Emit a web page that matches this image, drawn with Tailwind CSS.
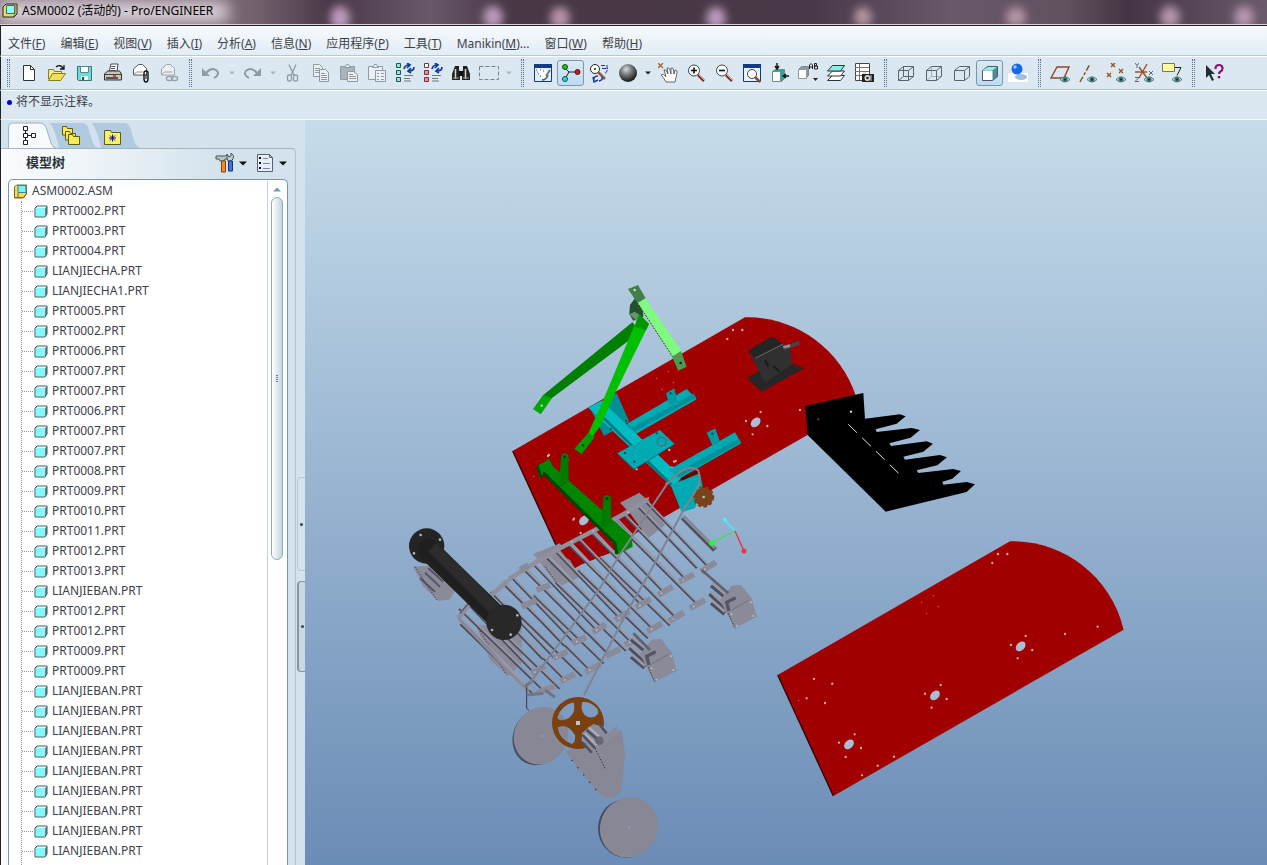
<!DOCTYPE html>
<html lang="zh-CN">
<head>
  <meta charset="UTF-8" />
  <meta name="viewport" content="width=device-width, initial-scale=1.0" />
  <title>ASM0002 (活动的) - Pro/ENGINEER</title>
  <script src="https://cdn.jsdelivr.net/npm/@tailwindcss/browser@4"></script>
</head>
<body class="h-screen flex flex-col overflow-hidden bg-[#dbe8f1] font-['Noto_Sans','Noto_Sans_CJK_SC',sans-serif] text-xs text-[#3c4248]">

  <!-- Shared symbols -->
  <svg class="hidden">
    <symbol id="caret" viewBox="0 0 8 5"><path d="M0 .5h8L4 4.500z" fill="currentColor"/></symbol>
    <symbol id="eye" viewBox="0 0 10 7"><path d="M0 3.5Q5-2 10 3.500Q5 8.500 0 3.500z" fill="#c8d4d8" stroke="#4a5a60" stroke-width=".8"/><circle cx="5" cy="3.500" r="2.500" fill="#2a7a78"/><circle cx="5" cy="3.500" r="1" fill="#0a2a2c"/></symbol>
    <symbol id="part" viewBox="0 0 14 14"><path d="M1 4l2-2h10v8l-2 3H1z" fill="#5a8c90" stroke="#4a565a"/><path d="M1.500 4.500L3.500 2.500h9L11 4.500z" fill="#d8ffff"/><path d="M1.500 4h9.500v8.500H1.500z" fill="#84f8fa"/></symbol>
    <symbol id="lens" viewBox="0 0 20 20"><path d="M12 12l6 6" stroke="#7a2a20" stroke-width="2.500"/><path d="M13 12l5.500 5.500" stroke="#e0a898"/><circle cx="8" cy="7.500" r="5.500" fill="#f6f9fb" stroke="#444"/></symbol>
  </svg>

  <!-- Title bar -->
  <header class="relative h-[26px] shrink-0 overflow-hidden border-b border-[#222] bg-[#5b4958] flex items-center">
    <svg class="absolute inset-0 w-full h-full" viewBox="0 0 1267 25" preserveAspectRatio="none">
      <defs>
        <linearGradient id="glass"><stop offset="0" stop-color="#8d7d8b"/><stop offset=".2" stop-color="#75626f"/><stop offset=".26" stop-color="#4a3847"/><stop offset=".34" stop-color="#69586a"/><stop offset=".4" stop-color="#493746"/><stop offset=".64" stop-color="#493847"/><stop offset=".75" stop-color="#69586a"/><stop offset=".84" stop-color="#62515f"/><stop offset=".89" stop-color="#453443"/><stop offset="1" stop-color="#6b5a69"/></linearGradient>
        <filter id="soft" x="-50%" y="-100%" width="200%" height="300%"><feGaussianBlur stdDeviation="4"/></filter>
        <filter id="softer" x="-50%" y="-200%" width="200%" height="500%"><feGaussianBlur stdDeviation="8"/></filter>
      </defs>
      <rect width="1267" height="25" fill="url(#glass)"/>
      <rect x="0" y="2" width="228" height="20" fill="#e2dae1" filter="url(#softer)"/>
      <g filter="url(#soft)" fill="#bc9abb">
        <ellipse cx="340" cy="18" rx="10" ry="12"/><ellipse cx="493" cy="17" rx="10" ry="11"/><ellipse cx="560" cy="18" rx="10" ry="11" fill="#b893a6"/>
        <ellipse cx="716" cy="18" rx="10" ry="11"/><ellipse cx="863" cy="17" rx="9" ry="10" fill="#b595a2"/><ellipse cx="1016" cy="17" rx="10" ry="10" fill="#b595a6"/>
        <ellipse cx="1170" cy="17" rx="10" ry="11" fill="#b595ae"/><ellipse cx="1244" cy="17" rx="10" ry="11" fill="#b595ae"/>
      </g>
      <path d="M0 24.500h1267" stroke="#d8d0d6"/>
    </svg>
    <svg class="relative ml-[2px] mb-1 w-4 h-4" viewBox="0 0 16 16"><path d="M1 4l3-3h11v10l-3 3H1z" fill="#e9d96a" stroke="#222"/><path d="M4.500 2.500h8v8h-8z" fill="#8ff" stroke="#466"/><path d="M13 2v9l-2 3" stroke="#786a20" fill="none"/></svg>
    <h1 class="relative ml-1 mb-1 text-black">ASM0002 (活动的) - Pro/ENGINEER</h1>
  </header>

  <!-- Menu bar -->
  <nav class="h-[30px] shrink-0 pt-1.5 pl-[7px] flex items-center gap-[15px] whitespace-nowrap border-l border-b border-l-[#222] border-b-[#b4c9dc] bg-linear-to-b from-[#f6fafd] to-[#e3edf5]">
    <button>文件(<u>F</u>)</button>
    <button>编辑(<u>E</u>)</button>
    <button>视图(<u>V</u>)</button>
    <button>插入(<u>I</u>)</button>
    <button>分析(<u>A</u>)</button>
    <button>信息(<u>N</u>)</button>
    <button>应用程序(<u>P</u>)</button>
    <button>工具(<u>T</u>)</button>
    <button>Manikin(<u>M</u>)...</button>
    <button>窗口(<u>W</u>)</button>
    <button>帮助(<u>H</u>)</button>
  </nav>

  <!-- Toolbar -->
  <div class="h-[34px] shrink-0 flex items-center border-l border-b border-l-[#222] border-b-[#a9bfd3] border-t border-t-white bg-[#dbe8f2] *:shrink-0 [&_button]:h-[26px] [&_button]:flex [&_button]:items-center [&_button]:justify-center">
    <span class="w-[14px] h-7 flex justify-center gap-px"><i class="border-l border-dotted border-[#54708a]"></i><i class="border-l border-dotted border-[#54708a]"></i></span>
    <button class="w-7" aria-label="新建"><svg class="w-5 h-5" viewBox="0 0 20 20"><path d="M4.500 2.500h7l4 4v11h-11z" fill="#fff" stroke="#333"/><path d="M11.500 2.500v4h4" fill="none" stroke="#333"/></svg></button>
    <button class="w-7" aria-label="打开"><svg class="w-5 h-5" viewBox="0 0 20 20"><path d="M1.500 16V6.500h5l1 2h7V11" fill="#f7ee8a" stroke="#8a7a20"/><path d="M1.500 17.500l4-7h13l-5 7z" fill="#f5e058" stroke="#8a7a20"/><path d="M9 4q4-3 7 1M17 2v4h-4" fill="none" stroke="#111" stroke-width="1.300"/></svg></button>
    <button class="w-7" aria-label="保存"><svg class="w-5 h-5" viewBox="0 0 20 20"><path d="M2.500 3.500h14v14h-13l-1-1z" fill="#6fdcd8" stroke="#377"/><path d="M5.500 3.500h8v6h-8z" fill="#fff" stroke="#588"/><path d="M6 13h7v4H6z" fill="#e8f4f4"/><path d="M7 14h2v3H7z" fill="#255"/></svg></button>
    <button class="w-7" aria-label="打印"><svg class="w-5 h-5" viewBox="0 0 20 20"><path d="M6 9l2-8h7l-1 8" fill="#fff" stroke="#444"/><path d="M8.500 3.500h4M8 5.500h4M7.500 7.500h5" stroke="#555"/><path d="M1.500 11l3-3h12l2 3v6h-17z" fill="#c9c6b8" stroke="#333"/><path d="M2 11.500h16" stroke="#444"/><path d="M3 15h12" stroke="#555" stroke-width="2"/><path d="M10 13h3" stroke="#c22" stroke-width="1.500"/></svg></button>
    <button class="w-7" aria-label="发送附件"><svg class="w-5 h-5" viewBox="0 0 20 20"><path d="M2.500 12V6l5-4.500h4l4 4V12z" fill="#fff" stroke="#555"/><path d="M2.500 12l3-3h6" stroke="#888" fill="none"/><path d="M13 17V10q0-2 2-2t2 2v6q0 3-2 3t-2-3" stroke="#111" fill="none" stroke-width="1.400"/><path d="M15 11v5" stroke="#111"/></svg></button>
    <button class="w-7" aria-label="发送链接"><svg class="w-5 h-5" viewBox="0 0 20 20" fill="none" stroke="#98a3ac"><path d="M2.500 12V6l5-4.500h4l4 4V12z" fill="#edf2f6"/><path d="M2.500 12l3-3h8"/><rect x="7.500" y="13.500" width="6" height="4" rx="2" stroke-width="1.500"/><rect x="12.500" y="13.500" width="6" height="4" rx="2" stroke-width="1.500"/></svg></button>

    <span class="w-[14px] h-7 flex justify-center gap-px"><i class="border-l border-dotted border-[#54708a]"></i><i class="border-l border-dotted border-[#54708a]"></i></span>
    <button class="w-7" aria-label="撤消"><svg class="w-5 h-5" viewBox="0 0 20 20"><path d="M5 10q5-6 10-3 5 4-2 8" fill="none" stroke="#8f9aa3" stroke-width="2"/><path d="M1 5v8h8z" fill="#8f9aa3"/></svg></button>
    <button class="w-[13px] text-[#a8b4be]" aria-label="撤消列表"><svg class="w-1.5 h-1"><use href="#caret"/></svg></button>
    <button class="w-7" aria-label="重做"><svg class="w-5 h-5" viewBox="0 0 20 20"><path d="M15 10q-5-6-10-3-5 4 2 8" fill="none" stroke="#8f9aa3" stroke-width="2"/><path d="M19 5v8h-8z" fill="#8f9aa3"/></svg></button>
    <button class="w-[13px] text-[#a8b4be]" aria-label="重做列表"><svg class="w-1.5 h-1"><use href="#caret"/></svg></button>
    <button class="w-7" aria-label="剪切"><svg class="w-5 h-5" viewBox="0 0 20 20" fill="none" stroke="#8f9aa3" stroke-width="1.300"><path d="M6 1.500l5 11M13 1.500l-5 11"/><rect x="4.500" y="12" width="4" height="6" rx="1.500"/><rect x="10.500" y="12" width="4" height="6" rx="1.500"/></svg></button>
    <button class="w-7" aria-label="复制"><svg class="w-5 h-5" viewBox="0 0 20 20" fill="#eaf0f4" stroke="#8f9aa3"><path d="M2.500 1.500h6l3 3v9h-9z"/><path d="M4 5.500h5M4 7.500h4M4 9.500h4"/><path d="M8.500 6.500h6l3 3v9h-9z"/><path d="M10 10.500h4M10 12.500h6M10 14.500h6M10 16.500h6"/></svg></button>
    <button class="w-7" aria-label="粘贴"><svg class="w-5 h-5" viewBox="0 0 20 20" fill="#eaf0f4" stroke="#8f9aa3"><path d="M1.500 3.500h14v13h-14z" fill="#a9b3ba"/><path d="M5.500 4.500l2-3h2l2 3z"/><path d="M8.500 8.500h6l4 3v7h-10z"/><path d="M10 11.500h4M10 13.500h7M10 15.500h7"/></svg></button>
    <button class="w-7" aria-label="选择性粘贴"><svg class="w-5 h-5" viewBox="0 0 20 20" fill="#eaf0f4" stroke="#8f9aa3"><path d="M1.500 3.500h14v13h-14z"/><path d="M5.500 4.500l2-3h2l2 3z"/><path d="M8.500 7.500h10v11h-10z"/><path d="M10 10.500h2M10 13.500h2M10 16.500h2M14 10.500h3M14 13.500h3M14 16.500h3"/></svg></button>
    <button class="w-7" aria-label="再生"><svg class="w-5 h-5" viewBox="0 0 20 20"><g fill="#8fe8d8" stroke="#255"><path d="M1.500.5h4v4h-4zM1.500 7.500h4v4h-4zM1.500 14.500h4v4h-4z"/></g><path d="M9 6q1-4 5-4M12 0l3 2-3 3M19 4q0 4-5 4M16 5l-3 3 3 2" fill="none" stroke="#123a98" stroke-width="1.700"/><path d="M9 12.500h9M9 15.500h6M9 18h7" stroke="#777"/></svg></button>
    <button class="w-7" aria-label="再生管理器"><svg class="w-5 h-5" viewBox="0 0 20 20"><g fill="#f58a98" stroke="#733"><path d="M1.500.5h4v4h-4z" fill="#fff"/><path d="M1.500 7.500h4v4h-4zM1.500 14.500h4v4h-4z"/></g><path d="M9 6q1-4 5-4M12 0l3 2-3 3M19 4q0 4-5 4M16 5l-3 3 3 2" fill="none" stroke="#123a98" stroke-width="1.700"/><path d="M9 12.500h9M9 15.500h6M9 18h7" stroke="#777"/></svg></button>
    <button class="w-7" aria-label="查找"><svg class="w-5 h-5" viewBox="0 0 20 20"><path d="M4 3h4v4l1 2v8H1V11zM12 3h4l3 8v6h-8V9l1-2z" fill="#222"/><path d="M8 8h4v5H8z" fill="#111"/><path d="M4.500 6v10M14.500 6v10" stroke="#d8d8c8" stroke-width="1.500"/><path d="M2 15h6M12 15h6" stroke="#999"/></svg></button>
    <button class="w-7" aria-label="选取框"><svg class="w-5 h-5" viewBox="0 0 20 20"><path d="M.5 3.500h19v13H.5z" fill="none" stroke="#75828d" stroke-dasharray="4 2"/></svg></button>
    <button class="w-3 text-[#a8b4be]" aria-label="选取列表"><svg class="w-1.5 h-1"><use href="#caret"/></svg></button>

    <span class="w-[14px] h-7 flex justify-center gap-px"><i class="border-l border-dotted border-[#54708a]"></i><i class="border-l border-dotted border-[#54708a]"></i></span>
    <button class="w-7" aria-label="重画"><svg class="w-5 h-5" viewBox="0 0 20 20"><path d="M1.500 1.500h17v17h-17z" fill="#dff0fa" stroke="#123a78"/><path d="M1 1h18v4H1z" fill="#123a88"/><path d="M3 6l10 1 3 4-5 5-7-5z" fill="#fff"/><path d="M3 7h1M4 9h1M5 11h1M7 13h1M7 7h1M10 8h1" stroke="#345"/><path d="M9 17q4 0 6-5" fill="none" stroke="#456" stroke-width="1.500"/><path d="M13 13l4-6" stroke="#7a7078" stroke-width="2"/></svg></button>
    <button class="w-[27px] rounded-[3px] border border-[#8294a3] bg-linear-to-b from-[#dbe9f4] to-[#bcdcf2]" aria-label="旋转中心"><svg class="w-5 h-5" viewBox="0 0 20 20"><path d="M3 4l5 5h8M8 9l-4 7" fill="none" stroke="#222"/><circle cx="4" cy="4" r="2.500" fill="#1cc41c" stroke="#151"/><circle cx="16.500" cy="9" r="2.500" fill="#d8141c" stroke="#511"/><circle cx="4" cy="16" r="2.500" fill="#28d8e8" stroke="#155"/></svg></button>
    <button class="ml-px w-7" aria-label="定向模式"><svg class="w-5 h-5" viewBox="0 0 20 20"><circle cx="6" cy="6" r="4.500" fill="#fff" stroke="#222"/><circle cx="6" cy="6" r="1" fill="#222"/><path d="M9 9l7 7" stroke="#8a5a48" stroke-width="2.500"/><path d="M12 2.500h5M13 5.500h6M18 2v6l-2 3" fill="none" stroke="#16389c" stroke-dasharray="4 1"/><path d="M9 13q-5 0-4 5M4 14l1 5 4-2M10 18q4-1 3-4" fill="none" stroke="#16389c" stroke-width="1.400"/></svg></button>
    <button class="w-7" aria-label="外观库"><svg class="w-5 h-5" viewBox="0 0 20 20"><defs><radialGradient id="ball" cx=".4" cy=".3" r=".7"><stop offset="0" stop-color="#d8dcde"/><stop offset=".45" stop-color="#74787b"/><stop offset="1" stop-color="#151718"/></radialGradient></defs><circle cx="11" cy="10" r="9" fill="url(#ball)"/></svg></button>
    <button class="w-[13px] text-[#222]" aria-label="外观列表"><svg class="w-1.5 h-1"><use href="#caret"/></svg></button>
    <button class="w-7" aria-label="平移"><svg class="w-5 h-5" viewBox="0 0 20 20"><path d="M0 0l5 5M5 0L0 5" stroke="#a8622a" stroke-width="1.300"/><path d="M8 19q-2-4-5-7 2-2 5 1.500L6 7q2-1 3 2l1 2-1-6q2-1 3 2l1 4V5q2-1 2.500 2l.5 4 1-4q2.500 0 2 3l-2 9z" fill="#fff" stroke="#444" stroke-width=".8"/></svg></button>
    <button class="w-7" aria-label="放大"><svg class="w-5 h-5" viewBox="0 0 20 20"><use href="#lens"/><path d="M5 7.500h6M8 4.500v6" stroke="#111" stroke-width="1.600"/></svg></button>
    <button class="w-7" aria-label="缩小"><svg class="w-5 h-5" viewBox="0 0 20 20"><use href="#lens"/><path d="M5 7.500h6" stroke="#111" stroke-width="1.600"/></svg></button>
    <button class="w-7" aria-label="重新调整"><svg class="w-5 h-5" viewBox="0 0 20 20"><path d="M1.500 1.500h17v17h-17z" fill="#eef5fa" stroke="#123a78"/><path d="M1 1h18v4H1z" fill="#123a88"/><path d="M13 14l5 5" stroke="#8a4a38" stroke-width="2.500"/><circle cx="10" cy="11" r="4.500" fill="#fff" stroke="#444"/></svg></button>
    <button class="w-7" aria-label="重定向"><svg class="w-5 h-5" viewBox="0 0 20 20"><path d="M2.500 8.500l3-2h9v9l-3 3h-9z" fill="#2aa8a8" stroke="#788"/><path d="M2.500 8.500h8v10h-8z" fill="#fff" stroke="#788"/><path d="M7 0v5M5 3l2 3 2-3M19 13h-5M16 11l-3 2 3 2" stroke="#111" fill="none" stroke-width="1.400"/></svg></button>
    <button class="w-7" aria-label="保存的视图列表"><svg class="w-5 h-5" viewBox="0 0 20 20"><path d="M.5 6.500l3-3h7v9l-3 3h-7z" fill="#7aa0b0" stroke="#888"/><path d="M.5 6.500h8v9h-8z" fill="#fff" stroke="#999"/><path d="M11.500 6V2l1.500-1.500L14.500 2v4M11.500 4h3M16.500.5V6h3V3h-3 2V.5z" fill="none" stroke="#222"/><path d="M15 15h5l-2.500 3z" fill="#222"/></svg></button>
    <button class="w-7" aria-label="层"><svg class="w-5 h-5" viewBox="0 0 20 20" stroke="#333"><path d="M1.500 17.500l5-5h12l-4 5z" fill="#fff"/><path d="M1.500 13l5-5h12l-4 5z" fill="#fff"/><path d="M1.500 8l5-5.500h12l-4 5.500z" fill="#7ff2ee"/></svg></button>
    <button class="w-7" aria-label="视图管理器"><svg class="w-5 h-5" viewBox="0 0 20 20"><path d="M1.500.5h14v17h-14z" fill="#fff" stroke="#444"/><path d="M1 4.500h14M1 8.500h14M1 12.500h14M5.500 1v16" stroke="#777"/><path d="M8 11h12v8H8z" fill="#222"/><path d="M9 10h3M17 12v6" stroke="#bbb"/><circle cx="13.500" cy="15" r="3" fill="#ddd"/><circle cx="13.500" cy="15" r="1.300" fill="#222"/></svg></button>

    <span class="w-[14px] h-7 flex justify-center gap-px"><i class="border-l border-dotted border-[#54708a]"></i><i class="border-l border-dotted border-[#54708a]"></i></span>
    <button class="w-7" aria-label="线框"><svg class="w-5 h-5" viewBox="0 0 20 20" fill="none" stroke="#5a646c"><path d="M2.500 7.500h10v10h-10zM7.500 3.500h10v10h-10zM2.500 7.500l5-4M12.500 7.500l5-4M12.500 17.500l5-4M2.500 17.500l5-4"/></svg></button>
    <button class="w-7" aria-label="隐藏线"><svg class="w-5 h-5" viewBox="0 0 20 20" fill="none" stroke="#5a646c"><path d="M7.500 4v9.500H17M2.500 17.500l5-4" stroke="#a5b0b8"/><path d="M2.500 7.500h10v10h-10zM2.500 7.500l5-4h10v10l-5 4M12.500 7.500l5-4"/></svg></button>
    <button class="w-7" aria-label="无隐藏线"><svg class="w-5 h-5" viewBox="0 0 20 20" fill="none" stroke="#5a646c"><path d="M2.500 7.500h10v10h-10zM2.500 7.500l5-4h10v10l-5 4M12.500 7.500l5-4"/></svg></button>
    <button class="w-[27px] rounded-[3px] border border-[#8294a3] bg-linear-to-b from-[#dbe9f4] to-[#bcdcf2]" aria-label="着色"><svg class="w-5 h-5" viewBox="0 0 20 20"><path d="M2.500 7.500l5-4h10v10l-5 4h-10z" fill="#4a8c90" stroke="#556"/><path d="M3 7l5-3h9l-4 3z" fill="#8ff0ee"/><path d="M3 7.500h9.500V17H3z" fill="#fff"/></svg></button>
    <button class="ml-px w-7" aria-label="增强真实感"><svg class="w-5 h-5" viewBox="0 0 20 20"><path d="M0 10h20v9H0z" fill="#fff"/><ellipse cx="13" cy="14" rx="6" ry="3" fill="#9fbde0"/><circle cx="9" cy="6" r="5.500" fill="#1668f0"/><circle cx="7" cy="4" r="1.700" fill="#9cc8ff"/></svg></button>

    <span class="w-[14px] h-7 flex justify-center gap-px"><i class="border-l border-dotted border-[#54708a]"></i><i class="border-l border-dotted border-[#54708a]"></i></span>
    <button class="w-7" aria-label="基准平面"><svg class="w-5 h-5" viewBox="0 0 20 20"><path d="M1 15L7 4h12l-5 11z" fill="none" stroke="#8a4a28" stroke-width="1.400"/><use href="#eye" x="10" y="13" width="10" height="7"/></svg></button>
    <button class="w-7" aria-label="基准轴"><svg class="w-5 h-5" viewBox="0 0 20 20"><path d="M2 19L12 1" stroke="#8a5028" stroke-width="1.500" stroke-dasharray="6 2 3 2"/><use href="#eye" x="9" y="13" width="10" height="7"/></svg></button>
    <button class="w-7" aria-label="基准点"><svg class="w-5 h-5" viewBox="0 0 20 20"><path d="M5 0l4 4M9 0L5 4M13 6l4 4M17 6l-4 4M1 10l4 4M5 10l-4 4" stroke="#9a5424" stroke-width="1.400"/><use href="#eye" x="10" y="13" width="10" height="7"/></svg></button>
    <button class="w-7" aria-label="坐标系"><svg class="w-5 h-5" viewBox="0 0 20 20" fill="none"><path d="M1 9h12M13 1L5 15M5 4l8 11" stroke="#9a5424" stroke-width="1.400"/><path d="M1 0l2 2.500L5 0M3 2.500V5M15 8l4 4M19 8l-4 4M1 14.500h4l-4 4h4" stroke="#667"/><use href="#eye" x="10" y="13" width="10" height="7"/></svg></button>
    <button class="w-7" aria-label="注释"><svg class="w-5 h-5" viewBox="0 0 20 20"><path d="M.5.5h12v8H.5z" fill="#ffffa0" stroke="#776"/><path d="M13 4.500h6l-4 8" fill="none" stroke="#222"/><use href="#eye" x="10" y="13" width="10" height="7"/></svg></button>

    <span class="w-[14px] h-7 flex justify-center gap-px"><i class="border-l border-dotted border-[#54708a]"></i><i class="border-l border-dotted border-[#54708a]"></i></span>
    <button class="w-7" aria-label="上下文帮助"><svg class="w-5 h-5" viewBox="0 0 20 20"><path d="M2 2v13l3-3 3 6 2-1-3-6h4z" fill="#222c38"/><path d="M11.500 6q0-4 3.500-4t3.500 3.500q0 2-2 3-1.500 1-1.500 2.500" fill="none" stroke="#8a1078" stroke-width="2.200"/><path d="M13.800 13h2.400v2.300h-2.400z" fill="#8a1078"/></svg></button>
  </div>

  <!-- Message line -->
  <div class="h-[30px] shrink-0 pl-1.5 pb-1.5 flex items-center gap-1 border-l border-l-[#222] border-t border-t-white border-b border-b-[#f3f8fb]">
    <span class="w-[5px] h-[5px] rounded-full bg-[#0000d8]"></span>
    <p>将不显示注释。</p>
  </div>

  <div class="flex-1 min-h-0 flex">
    <!-- Model tree -->
    <aside class="w-[305px] shrink-0 flex border-l border-[#222] bg-[#d3e2ec]">
      <div class="flex-1 min-w-0 flex flex-col">
        <div class="h-7 shrink-0 flex items-end pl-[7px]">
          <button class="relative z-10 w-12 h-[26px]" aria-label="模型树">
            <svg class="w-12 h-[26px]" viewBox="0 0 48 26"><path d="M.5 26V5q0-4 4-4H32q4 0 6 4l5 16q2 5 5 5z" fill="#f8fbfd"/><path d="M.5 26V5q0-4 4-4H32q4 0 6 4l5 16q2 5 5 5" fill="none" stroke="#9fb0bf"/><path d="M15.500 4.500h4v4h-4zM15.500 11.500h4v4h-4zM15.500 18.500h4v4h-4zM23.500 11.500h4v4h-4zM17.500 8.500v3M17.500 15.500v3M19.500 13.500h4" fill="#fff" stroke="#222"/></svg>
          </button>
          <button class="-ml-1.5 w-12 h-[26px]" aria-label="文件夹浏览器">
            <svg class="w-12 h-[26px]" viewBox="0 0 48 26"><path d="M0 1h32q4 0 6 4l5 16q2 4 5 5H9Q6 10 0 1z" fill="#b0cadf"/><g fill="#f6ec58" stroke="#5f5a18"><path d="M12.500 13V4.500h4l1 2h5V13z"/><path d="M15.500 18V9.500h4l1 2h5V18z"/><path d="M18.500 22.500v-10h4l1 2h6v8z"/></g></svg>
          </button>
          <button class="-ml-1.5 w-12 h-[26px]" aria-label="收藏夹">
            <svg class="w-12 h-[26px]" viewBox="0 0 48 26"><path d="M0 1h32q4 0 6 4l5 16q2 4 5 5H9Q6 10 0 1z" fill="#b0cadf"/><path d="M12.500 22.500v-14h6l1 2h9v12z" fill="#f8f070" stroke="#5f5a18"/><path d="M20.500 12.500v7M17 16h7M18 13.500l5 5M23 13.500l-5 5" stroke="#10109a"/></svg>
          </button>
        </div>

        <div class="flex-1 min-h-0 flex flex-col rounded-tr border-t border-r border-t-[#a3b4c2] border-r-[#b4c4d0] bg-linear-to-r from-[#fafcfe] via-[#e9f1f6] via-40% to-[#d3e2ec] to-75%">
          <div class="h-[30px] shrink-0 pl-[25px] pr-[8px] pb-0.5 flex items-center">
            <h2 class="flex-1 text-[13px] font-bold text-[#2c3338]">模型树</h2>
            <button class="flex items-center gap-1 text-[#111]" aria-label="设置">
              <svg class="w-5 h-5" viewBox="0 0 20 20"><path d="M1 6V3h9q3-2 3 3h-3l-1 2H5l-1-2z" fill="#b9c5c8" stroke="#455"/><path d="M6.500 8h4v11h-4z" fill="#f28a28" stroke="#8a4010"/><path d="M12 1l2 3 2-1V0q4 2 2 6l-2 2h-3l-1-3z" fill="#c5ced2" stroke="#455"/><path d="M13.500 8h4v10h-4z" fill="#3f78d0" stroke="#15357a"/></svg>
              <svg class="w-2 h-[5px]"><use href="#caret"/></svg>
            </button>
            <button class="ml-2 flex items-center gap-1 text-[#111]" aria-label="显示">
              <svg class="w-5 h-5" viewBox="0 0 20 20"><path d="M2.500 1.500h12l3 3v14h-15z" fill="#e8edf6" stroke="#56606e"/><path d="M14.500 1.500v3h3" fill="none" stroke="#56606e"/><path d="M4 5h2M4 10h2M4 15h2" stroke="#111" stroke-width="2"/><path d="M8 5.500h5M8 10.500h7M8 15.500h7" stroke="#7088b8"/></svg>
              <svg class="w-2 h-[5px]"><use href="#caret"/></svg>
            </button>
          </div>

          <div class="flex-1 min-h-0 ml-[7px] mr-[7px] pt-px flex overflow-hidden rounded-t-[5px] border border-b-0 border-[#7398ad] bg-white">
            <div class="flex-1 min-w-0 overflow-hidden">
              <div class="h-5 pl-1 flex items-center gap-1">
                <svg class="w-[15px] h-[15px]" viewBox="0 0 15 15"><path d="M1.500 5V3l2-2h10v9l-3 4h-9z" fill="#f0da60" stroke="#7a6a20"/><path d="M5 1.500h8v7H5z" fill="#7ff0f2" stroke="#388"/><path d="M1.500 13.500h9l3-4M5 9v4" fill="none" stroke="#7a6a20"/></svg>
                <span>ASM0002.ASM</span>
              </div>
              <ul id="treeItems" class="ml-3 pb-4 border-l border-dotted border-[#909aa0]"></ul>
            </div>
            <!-- Scrollbar -->
            <div class="w-5 shrink-0 pl-[3px] flex flex-col items-start border-l border-[#c3d3dd]">
              <span class="h-4 w-3 shrink-0 flex items-center justify-center text-[#6f9bb5]"><svg class="w-2 h-[5px] rotate-180"><use href="#caret"/></svg></span>
              <div class="w-3 h-[363px] flex flex-col items-center justify-center gap-px rounded-full border border-[#8eabba] bg-linear-to-r from-white to-[#c5d5e1]">
                <i class="w-[2px] h-px bg-[#778]"></i><i class="w-[2px] h-px bg-[#778]"></i><i class="w-[2px] h-px bg-[#778]"></i><i class="w-[2px] h-px bg-[#778]"></i>
              </div>
            </div>
          </div>
        </div>
      </div>

      <!-- Splitter grips -->
      <div class="w-[9px] shrink-0 pl-px pt-[357px] flex flex-col gap-2.5">
        <div class="h-[94px] flex items-center justify-center rounded-l border border-r-0 border-[#b6c8d4]"><i class="w-[3px] h-[3px] rounded-full bg-[#345]"></i></div>
        <div class="h-[91px] flex items-center justify-center rounded-l border border-l-2 border-r-0 border-[#8795a0] bg-[#cbd8e1]"><i class="w-[3px] h-[3px] rounded-full bg-[#345]"></i></div>
      </div>
    </aside>

    <!-- Graphics area -->
    <main class="flex-1 min-w-0 bg-linear-to-b from-[#c6dcea] to-[#6b8cb6]">
      <svg class="w-full h-full" viewBox="305 120 962 745" preserveAspectRatio="xMidYMid slice">
        <defs>
          <g id="plate">
            <path d="M53 435L750 34C900 30 1050 130 1091 299L220 798Z" fill="#a10000"/>
            <path d="M53 435L220 798" stroke="#300" stroke-width="4"/>
            <g fill="#a9bed6"><ellipse cx="782" cy="349" rx="17" ry="12" transform="rotate(-45 782 349)"/><ellipse cx="525" cy="496" rx="17" ry="12" transform="rotate(-45 525 496)"/><ellipse cx="267" cy="643" rx="17" ry="12" transform="rotate(-45 267 643)"/></g>
            <path d="M714 72h0M742 72h0M697 99h0M162 447h0M217 461h0M140 505h0M195 519h0M797 318h0M753 345h0M817 360h0M773 385h0M915 312h0M1013 290h0M542 465h0M495 491h0M560 507h0M515 533h0M284 613h0M237 638h0M303 654h0M257 681h0M402 680h0M353 707h0M306 736h0" stroke="#dca8a8" stroke-width="7" stroke-linecap="round"/>
            <path d="M520 197h0M485 217h0M535 230h0M500 250h0M116 511h0" stroke="#d07070" stroke-width="4" stroke-linecap="round"/>
          </g>
          <!-- conveyor bars: upper run and return run -->
          <path id="bars" d="M735 92l190 198M669 131l190 198M603 170l190 198M537 209l190 198M471 248l190 198M405 287l190 198M339 326l190 198M273 365l190 198M207 404l190 198M711 106l180 188M645 145l180 188M579 184l180 188M513 223l180 188M447 262l180 188M381 301l180 188M315 340l180 188M249 379l180 188M640 150l253 253M574 188l253 253M508 226l253 253M442 264l253 253M376 302l253 253M310 340l253 253M244 378l253 253M178 416l253 245M600 262l210 204M534 300l210 204M468 338l210 204M402 376l210 204M336 414l210 204M270 452l210 204M178 445l218 222M182 462l205 200"/>
          <!-- wheel bracket, reused along the conveyor -->
          <g id="bracket">
            <path d="M0 10L60 60M-5 35L50 85M0 62L40 95" stroke="#4d4f5e" stroke-width="16"/>
            <path d="M2 5L62 55M-3 30L50 78M2 57L40 90" stroke="#9a9aa8" stroke-width="8"/>
            <path d="M25 55L60 12L88 10L120 50L135 105L70 140L45 95Z" fill="#8a8a99"/>
            <path d="M50 95L70 140" stroke="#2d3140" stroke-width="3" stroke-dasharray="4 4"/>
            <path d="M72 48L45 62L52 88" stroke="#525563" stroke-width="10" fill="none"/><path d="M60 85L112 55" stroke="#6f7180" stroke-width="3"/>
            <path d="M60 98h0M118 62h0M125 103h0M75 132h0" stroke="#b8c0cc" stroke-width="6" stroke-linecap="round"/>
          </g>
        </defs>

        <!-- side plates -->
        <use href="#plate" transform="translate(760 530) scale(.3333)"/>
        <use href="#plate" transform="translate(495 306) scale(.3333)"/>

        <!-- gearbox and share -->
        <g transform="translate(700 300) scale(.3333)">
          <path d="M140 233L250 180L313 205L185 275Z" fill="#262626"/>
          <path d="M145 152L215 110L272 150L275 195L195 248L165 190Z" fill="#303030"/>
          <path d="M145 152L215 110L250 132L165 175Z" fill="#242424"/>
          <path d="M165 175L250 132" stroke="#686868" stroke-width="3"/>
          <path d="M252 145L298 128" stroke="#454545" stroke-width="12"/><path d="M250 142L270 137" stroke="#8b929a" stroke-width="8"/>
          <path d="M195 180L205 200M220 198L238 215" stroke="#1c1c1c" stroke-width="7"/>
          <path d="M316 318L490 279L495 356L600 343L617 349L590 371L527 388L530 396L635 384L660 390L632 413L568 430L573 438L680 424L699 431L670 455L610 470L615 479L720 465L741 472L712 496L650 511L655 519L760 507L783 513L757 536L727 545L730 554L800 546L825 553L800 576L557 635L323 405Z" fill="#000"/>
          <path d="M445 373L597 521" stroke="#dfe6ee" stroke-width="3" stroke-dasharray="36 22"/>
          <path d="M453 335h0" stroke="#d5dbe5" stroke-width="7" stroke-linecap="round"/><path d="M355 358h0" stroke="#a03010" stroke-width="7" stroke-linecap="round"/>
        </g>

        <!-- cyan frame -->
        <g transform="translate(500 270) scale(.3333)">
          <path d="M268 410L350 370L388 455L312 498Z" fill="#008f98"/>
          <path d="M380 462L560 357L590 388L408 492Z" fill="#00aab2"/><path d="M395 482L585 377" stroke="#00929c" stroke-width="14"/>
          <path d="M498 370L523 355L533 395L508 405Z" fill="#009aa4"/>
          <path d="M265 413L305 392L545 622L520 655Z" fill="#00bcc2"/><path d="M312 445L520 650" stroke="#007882" stroke-width="8"/>
          <path d="M505 600L705 487L724 520L540 625Z" fill="#00aab2"/><path d="M530 617L720 511" stroke="#00929c" stroke-width="14"/>
          <path d="M620 488L646 475L660 515L638 528Z" fill="#009aa4"/>
          <path d="M352 550L480 480L524 522L402 598Z" fill="#00aab2"/><path d="M352 550L402 598L524 522" fill="none" stroke="#00727c" stroke-width="3"/>
          <circle cx="485" cy="515" r="13" fill="none" stroke="#536f7a" stroke-width="4"/>
          <path d="M512 645L600 610L608 650L585 715L545 727Z" fill="#00aab2"/><path d="M545 628L595 605" stroke="#500" stroke-width="8"/>
          <path d="M512 370h0M637 491h0M375 549h0M470 490h0M378 452h0M332 478h0M403 575h0" stroke="#06454c" stroke-width="7" stroke-linecap="round"/>
          <path d="M522 575h0M508 540h0M410 598h0M144 558h0M220 749h0" stroke="#d9a8b0" stroke-width="7" stroke-linecap="round"/>
          <circle cx="611" cy="681" r="28" fill="#7a431c" stroke="#7a431c" stroke-width="8" stroke-dasharray="10 7"/><circle cx="611" cy="681" r="4" fill="#9fc6cf"/>
        </g>

        <!-- conveyor -->
        <g transform="translate(400 470) scale(.3333)" fill="none">
          <g fill="#8a8a99"><path d="M400 252L480 220L505 262L540 320L475 352L430 290Z"/><path d="M660 98L718 68L745 92L795 165L745 205L690 130Z"/><path d="M228 465L365 470L365 580L325 618L270 570Z"/><path d="M40 290L110 285L165 362L150 388L115 393L70 350Z"/></g>
          <path d="M60 325L105 365M75 308L120 350M85 295L130 335" stroke="#545665" stroke-width="6"/>
          <path d="M45 290L110 390M435 290L480 350M235 475L320 615" stroke="#333846" stroke-width="3" stroke-dasharray="4 5"/>
          <path d="M480 240L570 195L650 232L640 245L540 285L500 265Z M640 165L690 140L708 185L680 193Z" fill="#a10000"/>
          <path d="M848 142L945 240" stroke="#4d505e" stroke-width="16"/><path d="M850 140L945 234" stroke="#8c8c9a" stroke-width="8"/>

          <use href="#bars" stroke="#474b5c" stroke-width="8"/>
          <use href="#bars" x="2" y="-3" stroke="#9999a7" stroke-width="5"/>
          <path d="M175 445L205 405L275 375L330 325L390 288L470 240L585 180L690 122L745 88" stroke="#8f8f9e" stroke-width="14"/>
          <path d="M175 445L385 665" stroke="#8a8a99" stroke-width="8"/>
          <path d="M180 430L205 400" stroke="#555966" stroke-width="4"/>
          <path d="M395 610L435 588M460 565L503 545M518 520L558 502M578 487L618 463M645 450L688 425M708 412L752 387M775 375L818 350M838 335L882 313M903 305L948 277M482 635L525 612M557 607L602 582M618 558L660 537M675 525L718 503M742 485L786 460M808 453L852 427M870 415L915 390M365 410L410 390M410 360L450 345M360 300L385 285M410 670L465 648" stroke="#8a8a99" stroke-width="18"/>
          <path d="M405 606h0M470 562h0M530 515h0M590 480h0M657 445h0M720 407h0M785 370h0M850 330h0M915 298h0M494 630h0M570 600h0M690 517h0M755 478h0M820 447h0M882 409h0M320 325h0M515 215h0M580 183h0M685 127h0M745 84h0" stroke="#c5ccd6" stroke-width="5" stroke-linecap="round"/>
          <path d="M380 640L380 715L388 722" stroke="#333846" stroke-width="3"/><path d="M375 650L400 630M380 675L430 670M435 660L465 682" stroke="#727382" stroke-width="9"/>
          <use href="#bracket" x="935" y="335"/><use href="#bracket" x="695" y="497"/>
          <path d="M905 300L985 370M700 490L750 540" stroke="#606270" stroke-width="8"/>
        </g>

        <!-- three-point hitch -->
        <g transform="translate(500 270) scale(.3333)">
          <path d="M405 85L390 105L388 132L400 152L430 140L425 90Z" fill="#24502c"/><path d="M388 132L412 155L418 135L405 125Z" fill="#63956c"/>
          <path d="M384 57L414 45L437 85L412 98Z" fill="#417e48"/>
          <path d="M397 157L415 178L405 198L155 385L122 432L100 417L130 375Z" fill="#007e00"/><path d="M130 375L155 385L122 432L100 417Z" fill="#00a800"/>
          <path d="M418 133L447 162L350 360L300 470L285 490L245 552L224 536L265 490L312 385L385 210Z" fill="#00c000"/><path d="M418 133L447 162L438 180L405 170Z" fill="#009400"/><path d="M265 490L285 500L245 552L224 536Z" fill="#009c00"/>
          <path d="M412 98L437 86L545 243L518 260Z" fill="#80fa80"/><path d="M412 98L518 260" stroke="#163b18" stroke-width="3" stroke-dasharray="5 4"/>
          <path d="M516 260L543 243L560 290L535 302Z" fill="#4b9a50"/>
          <path d="M542 279h0M249 526h0" stroke="#062a06" stroke-width="8" stroke-linecap="round"/><path d="M125 407h0M404 60h0" stroke="#c8e6d0" stroke-width="7" stroke-linecap="round"/>
          <path d="M110 588L148 568L160 590L395 800L398 830L350 855L345 820L130 612L118 625Z" fill="#008600"/>
          <path d="M112 588L122 620M130 608L345 820L350 852" fill="none" stroke="#004600" stroke-width="9"/>
          <path d="M176 645L184 556Q195 543 205 556L206 640L190 652Z" fill="#007a00"/><path d="M304 768L310 682Q321 668 333 682L334 760L318 772Z" fill="#007a00"/>
          <path d="M194 560h0M321 686h0M125 620h0" stroke="#053505" stroke-width="8" stroke-linecap="round"/>
        </g>

        <!-- drive chain -->
        <path d="M530 683L567 633L600 588L619 556L667 484Q686 462 698 470Q702 480 696 490L683 511L650 572L628 610L584 695" fill="none" stroke="#7f8290" stroke-width="2"/>

        <!-- black axle -->
        <g transform="translate(400 470) scale(.3333)">
          <circle cx="80" cy="228" r="53" fill="#242424"/>
          <path d="M85 240L290 440" stroke="#1f1f1f" stroke-width="66" stroke-linecap="round"/><path d="M98 232L295 430" stroke="#2c2c2c" stroke-width="36"/>
          <circle cx="312" cy="457" r="53" fill="#282828"/>
          <path d="M62 195h0M120 209h0M42 250h0M352 436h0M276 480h0M332 494h0" stroke="#aab6c6" stroke-width="8" stroke-linecap="round"/>
        </g>

        <!-- wheels, sprocket and mount -->
        <g transform="translate(490 680) scale(.3333)">
          <ellipse cx="146" cy="170" rx="76" ry="88" transform="rotate(28 146 170)" fill="#4a4f60"/>
          <ellipse cx="153" cy="167" rx="80" ry="88" transform="rotate(28 153 167)" fill="#878796"/>
          <ellipse cx="408" cy="445" rx="84" ry="88" fill="#454a5c"/><ellipse cx="417" cy="442" rx="86" ry="92" transform="rotate(28 417 442)" fill="#878796"/>
          <path d="M157 167h0M417 442h0" stroke="#7f9bbd" stroke-width="9" stroke-linecap="round"/>
          <path d="M225 215L395 150L405 220L396 325Q385 355 355 355Q335 350 325 338Z" fill="#878796"/>
          <path d="M245 240L328 342" stroke="#333846" stroke-width="4" stroke-dasharray="4 24"/>
          <path fill="#7a4010" fill-rule="evenodd" d="M264 51a78 78 0 1 1 0 156a78 78 0 1 1 0-156zM277 66Q270 90 284 105Q305 120 320 106Q330 96 318 82Q300 64 277 66zM250 67Q215 75 202 112Q204 124 222 120Q240 116 250 98Q256 80 250 67zM203 142Q208 180 246 192Q258 186 255 165Q240 140 218 138zM279 158Q292 140 322 142Q325 150 318 160Q300 188 278 192Q272 176 279 158z"/>
          <path d="M258 123h12v12h-12z" fill="#b5c8dc"/>
          <path d="M275 160L310 132L340 140L355 160L380 137L385 160L315 215L290 200Z" fill="#8a8a99"/>
          <path d="M290 150L325 180M278 165L315 205M275 185L305 218M325 130L350 160" stroke="#4b4e5c" stroke-width="7"/><path d="M296 142L330 172M284 160L320 195" stroke="#b0b0bc" stroke-width="6"/>
          <circle cx="328" cy="182" r="13" fill="#666878"/><path d="M315 205L345 265" stroke="#2b303c" stroke-width="3" stroke-dasharray="4 5"/>
        </g>

        <!-- spin centre -->
        <g fill="none" stroke-width="1.300">
          <path d="M735 531L725 520" stroke="#48f0f8"/><path d="M735 531L712 543" stroke="#30e840"/><path d="M735 531L744 551" stroke="#f02840"/>
          <circle cx="725" cy="520" r="2" fill="#48f0f8"/><circle cx="712" cy="543" r="3" fill="#30f040"/><circle cx="744" cy="551" r="2.500" fill="#f83048"/>
        </g>
      </svg>
    </main>
  </div>

  <script>
    const parts = [
      'PRT0002', 'PRT0003', 'PRT0004', 'LIANJIECHA', 'LIANJIECHA1', 'PRT0005', 'PRT0002', 'PRT0006',
      'PRT0007', 'PRT0007', 'PRT0006', 'PRT0007', 'PRT0007', 'PRT0008', 'PRT0009', 'PRT0010',
      'PRT0011', 'PRT0012', 'PRT0013', 'LIANJIEBAN', 'PRT0012', 'PRT0012', 'PRT0009', 'PRT0009',
      'LIANJIEBAN', 'LIANJIEBAN', 'LIANJIEBAN', 'LIANJIEBAN', 'LIANJIEBAN', 'LIANJIEBAN',
      'LIANJIEBAN', 'LIANJIEBAN', 'LIANJIEBAN'
    ];
    document.getElementById('treeItems').innerHTML = parts.map(name => `
      <li class="h-5 flex items-center">
        <span class="w-[11px] mr-px border-t border-dotted border-[#909aa0]"></span>
        <svg class="w-[14px] h-[14px] mr-1"><use href="#part"/></svg>
        <span>${name}.PRT</span>
      </li>`).join('');
  </script>
</body>
</html>
